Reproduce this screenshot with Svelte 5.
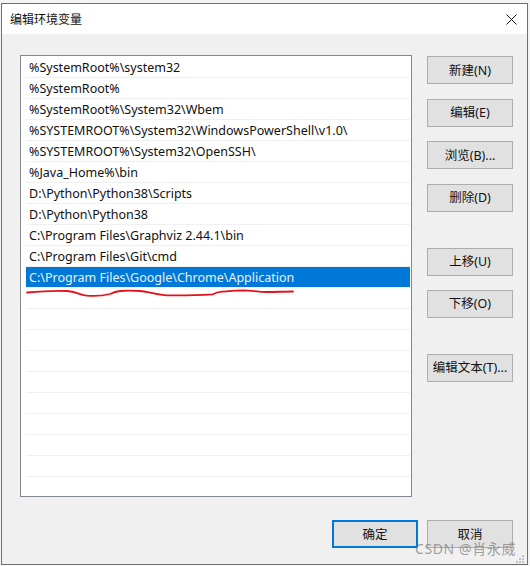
<script>
	const paths = [
		'%SystemRoot%\\system32',
		'%SystemRoot%',
		'%SystemRoot%\\System32\\Wbem',
		'%SYSTEMROOT%\\System32\\WindowsPowerShell\\v1.0\\',
		'%SYSTEMROOT%\\System32\\OpenSSH\\',
		'%Java_Home%\\bin',
		'D:\\Python\\Python38\\Scripts',
		'D:\\Python\\Python38',
		'C:\\Program Files\\Graphviz 2.44.1\\bin',
		'C:\\Program Files\\Git\\cmd',
		'C:\\Program Files\\Google\\Chrome\\Application'
	];
	const selected = 10;
	const rows = [...paths, ...Array(10).fill('')];

	const groups = [
		{ gap: 14.5, items: ['新建(N)', '编辑(E)', '浏览(B)...', '删除(D)'] },
		{ gap: 14, items: ['上移(U)', '下移(O)'] },
		{ gap: 0, items: ['编辑文本(T)...'] }
	];
</script>

<div class="page">
	<div class="dialog">
		<header>
			<span class="title">编辑环境变量</span>
			<svg class="close" width="11" height="11" viewBox="0 0 11 11" aria-hidden="true">
				<path d="M.5.5l10 10M10.500 .5l-10 10" fill="none" stroke="#111" stroke-width="1" />
			</svg>
		</header>

		<div class="body">
			<div class="main">
				<div class="list">
					{#each rows as row, i}
						<div class="row" class:selected={i === selected}>
							{row}
							{#if i === selected}
								<svg class="scribble" width="272" height="11" viewBox="0 0 272 11" aria-hidden="true">
									<path
										d="M1 5.500C12 4.500 28 3.500 41 4 50 4.500 54 8 61 8.700 70 9.300 78 8.500 84 7 88 5 90 4.300 94 4 102 3.500 108 3.700 114 4 124 5 132 8 141 8.300 156 8.700 175 8 187 7.300 190 5.500 192 5 196 4.700 204 4 210 3.300 217 3.300 226 3.500 232 5 241 5 250 5 258 4.500 267 4.500"
										fill="none"
										stroke="#e5121b"
										stroke-width="1.800"
										stroke-linecap="round"
									/>
								</svg>
							{/if}
						</div>
					{/each}
				</div>

				<div class="side">
					{#each groups as group}
						<div class="group" style:gap="{group.gap}px">
							{#each group.items as label}
								<button>{label}</button>
							{/each}
						</div>
					{/each}
				</div>
			</div>

			<footer>
				<button class="primary">确定</button>
				<button>取消</button>
			</footer>
		</div>

		<span class="watermark">CSDN @肖永威</span>
		<svg class="grip" width="8" height="8" viewBox="0 0 8 8" aria-hidden="true">
			<path d="M6 0h2v2H6zM3 3h2v2H3zM6 3h2v2H6zM0 6h2v2H0zM3 6h2v2H3zM6 6h2v2H6z" fill="#c2c2c2" />
		</svg>
	</div>
</div>

<style>
	:global(body) {
		margin: 0;
		background: #f4f4f4;
	}

	.page {
		width: 530px;
		height: 566px;
		padding: 3px 2px 0 1px;
		box-sizing: border-box;
		overflow: hidden;
		font-family: "Noto Sans", "Noto Sans CJK SC", sans-serif;
		font-size: 12.5px;
		color: #111;
	}

	.dialog {
		position: relative;
		height: 562px;
		box-sizing: border-box;
		border: 1px solid #6f6f6f;
		background: #f0f0f0;
		display: flex;
		flex-direction: column;
	}

	header {
		height: 30px;
		flex: none;
		background: #fff;
		display: flex;
		align-items: center;
		justify-content: space-between;
		padding: 0 10px 0 8px;
	}

	.title {
		font-size: 12px;
	}

	.body {
		flex: 1;
		display: flex;
		flex-direction: column;
		padding: 21px 14px 0 18px;
	}

	.main {
		display: flex;
		gap: 15px;
	}

	.list {
		width: 392px;
		height: 442px;
		box-sizing: border-box;
		border: 1px solid #828790;
		background: #fff;
		padding: 1px 1px 0 5px;
		overflow: hidden;
	}

	.row {
		position: relative;
		height: 21px;
		box-sizing: border-box;
		border-bottom: 1px solid #f0f0f0;
		padding-left: 3px;
		line-height: 21px;
		white-space: nowrap;
	}

	.row.selected {
		background: #0078d7;
		background-clip: padding-box;
		color: #e6f2fb;
		border-bottom-color: #fff;
	}

	.scribble {
		position: absolute;
		left: 0;
		top: 20px;
	}

	.side {
		display: flex;
		flex-direction: column;
		gap: 36px;
		padding-top: 1px;
	}

	.group {
		display: flex;
		flex-direction: column;
	}

	button {
		width: 86px;
		height: 28px;
		box-sizing: border-box;
		border: 1px solid #adadad;
		background: #e1e1e1;
		color: #111;
		font: inherit;
		padding: 0 0 2px;
	}

	button.primary {
		border: 2px solid #0078d7;
	}

	footer {
		display: flex;
		justify-content: flex-end;
		gap: 9px;
		margin-top: 23px;
	}

	.watermark {
		position: absolute;
		right: 11px;
		bottom: 6px;
		font-size: 14px;
		letter-spacing: 0.6px;
		color: rgba(120, 120, 120, 0.7);
	}

	.grip {
		position: absolute;
		right: 3px;
		bottom: 1px;
	}
</style>
